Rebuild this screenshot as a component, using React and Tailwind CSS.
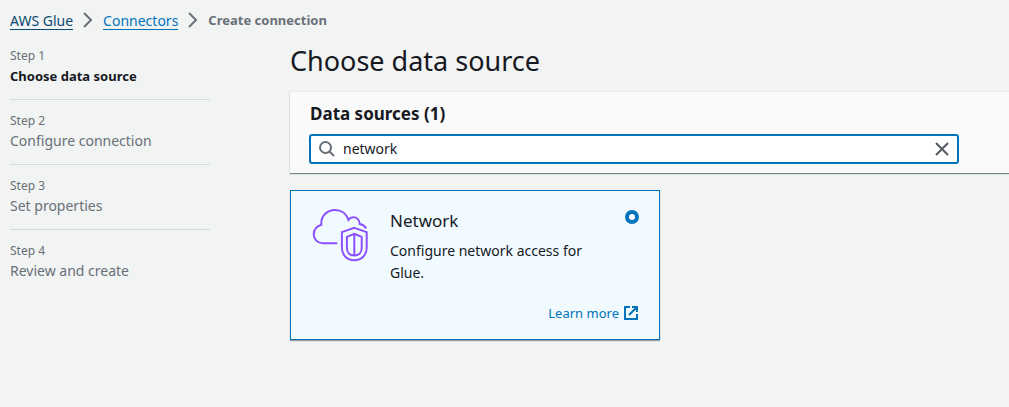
const steps = ['Choose data source', 'Configure connection', 'Set properties', 'Review and create'];

function Chevron() {
  return (
    <svg className="h-4 w-4 shrink-0" viewBox="0 0 16 16" fill="none" stroke="#687078" strokeWidth="2" aria-hidden="true">
      <path d="M4 1l7 7-7 7" />
    </svg>
  );
}

function CloudShield() {
  return (
    <svg className="h-[60px] w-[60px] shrink-0" viewBox="0 0 60 60" fill="none" stroke="#8c4fff" strokeWidth="2" aria-hidden="true">
      <path d="M27.3 34.3H12.7C7.5 34.3 3.700 30.300 3.700 25.200c0-4.600 3.300-8.400 7.600-9.500V14C11.300 6.700 17.500 1 25 1c6.200 0 11.500 3.800 13.400 9.800 1.300-1.700 3-2.500 5-2.500 3.500 0 6.100 2.700 6.300 6.700 2.600.5 4.900 2 6.600 4.300" />
      <path d="M44.300 18.900L56.700 23.100V38.800C56.700 46 51.500 51.200 44.300 51.200S31.900 46 31.900 38.800V23.100Z" />
      <path d="M44.300 24.800L51.700 27.800V39C51.700 43.500 48.800 46.500 44.300 46.500S36.900 43.500 36.900 39V27.800ZM44.300 24.800V46" />
    </svg>
  );
}

export default function App() {
  return (
    <div className="min-h-screen bg-[#f2f3f3] pl-[10px] pt-[10px] font-['Noto_Sans',sans-serif] text-[#16191f]">
      <nav aria-label="Breadcrumbs">
        <ol className="flex items-center gap-[7px] text-[14px] leading-5">
          <li><a href="#glue" className="block h-[19px] border-b border-[#0a4a74] text-[#0a4a74]">AWS Glue</a></li>
          <li><Chevron /></li>
          <li><a href="#connectors" className="block h-[19px] border-b border-[#0073bb] text-[#0073bb]">Connectors</a></li>
          <li><Chevron /></li>
          <li className="text-[13px] font-bold text-[#687078]" aria-current="page">Create connection</li>
        </ol>
      </nav>
      <div className="mt-4 flex items-start gap-20">
        <ol className="w-[200px] shrink-0">
          {steps.map((step, i) => (
            <li key={step} className={i < 3 ? 'mb-[11px] border-b border-[#d5dbdb] pb-[13px]' : ''}>
              <div className="text-[12px] leading-5 text-[#687078]">Step {i + 1}</div>
              <div className={i === 0 ? 'text-[13px] font-bold leading-5' : 'text-[14px] leading-5 text-[#687078]'}>{step}</div>
            </li>
          ))}
        </ol>
        <main className="min-w-0 flex-1">
          <h1 className="text-[27px] leading-[30px]">Choose data source</h1>
          <section className="mt-[15px] border-t border-[#eaeded] bg-[#fafafa] px-5 pb-[10px] pt-[10px] shadow-[0_1px_1px_0_rgba(0,28,36,0.5)]">
            <h2 className="text-[17px] font-bold leading-6">Data sources (1)</h2>
            <div className="mt-[9px] flex h-7 max-w-[648px] items-center rounded-xs border border-[#0073bb] bg-white pl-2 pr-[7px] ring-1 ring-[#0073bb]">
              <svg className="h-4 w-4 shrink-0" viewBox="0 0 16 16" fill="none" stroke="#687078" strokeWidth="2" aria-hidden="true">
                <circle cx="6.500" cy="6.500" r="5.500" />
                <path d="M10.500 10.500l4.500 4.500" />
              </svg>
              <input type="text" aria-label="Find data sources" defaultValue="network" className="ml-2 min-w-0 flex-1 bg-transparent text-[14px] leading-5 outline-none" />
              <button type="button" aria-label="Clear filter">
                <svg className="h-4 w-4" viewBox="0 0 16 16" fill="none" stroke="#545b64" strokeWidth="2" aria-hidden="true">
                  <path d="M2 2l12 12M14 2L2 14" />
                </svg>
              </button>
            </div>
          </section>
          <article className="mt-[17px] flex max-w-[370px] gap-5 border border-[#0073bb] bg-[#f1faff] pb-[15px] pl-[19px] pr-5 pt-[18px] shadow-[0_1px_1px_0_rgba(0,28,36,0.4)]">
            <CloudShield />
            <div className="min-w-0 flex-1">
              <div className="flex items-start justify-between">
                <label htmlFor="network" className="text-[17px] leading-6">Network</label>
                <input id="network" type="radio" name="source" defaultChecked className="mt-px h-[14px] w-[14px] appearance-none rounded-full border-4 border-[#0073bb] bg-white" />
              </div>
              <p className="mt-[7px] max-w-[200px] text-[14px] leading-[22px]">Configure network access for Glue.</p>
              <div className="mt-[18px] flex justify-end">
                <a href="#learn" className="flex items-center gap-1 text-[13px] leading-[22px] text-[#0073bb]">
                  Learn more
                  <svg className="h-4 w-4" viewBox="0 0 16 16" fill="none" stroke="currentColor" strokeWidth="2" aria-hidden="true">
                    <path d="M7 2H2v12h12V9M9 2h5v5M14 2L6 10" />
                  </svg>
                </a>
              </div>
            </div>
          </article>
        </main>
      </div>
    </div>
  );
}
